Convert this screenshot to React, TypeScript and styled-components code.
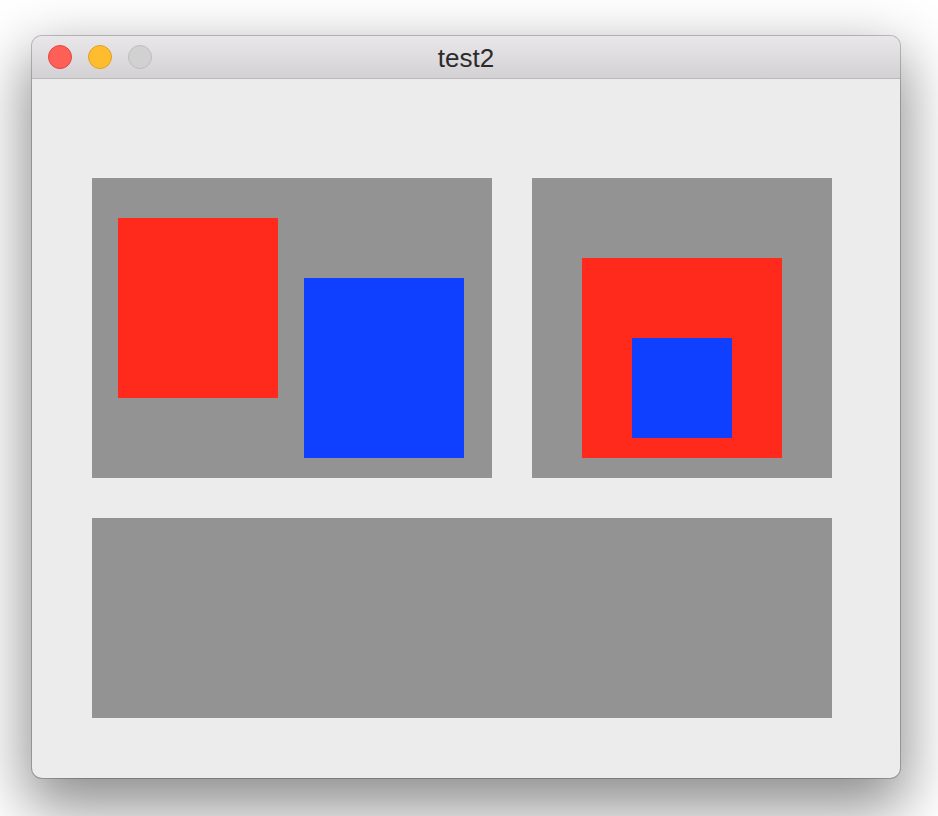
import React from "react";
import styled, { createGlobalStyle } from "styled-components";

const Global = createGlobalStyle`
  html, body { margin: 0; padding: 0; background: #ffffff; }
  body { width: 938px; height: 816px; overflow: hidden; font-family: "Liberation Sans", Arial, sans-serif; }
`;

const Page = styled.div`
  padding: 36px 0 0 32px;
`;

const Window = styled.div`
  width: 868px;
  height: 742px;
  box-sizing: border-box;
  border-radius: 10px;
  overflow: hidden;
  background: #ececec;
  box-shadow: 0 0 0 1px rgba(0, 0, 0, 0.22), 0 24px 60px 6px rgba(0, 0, 0, 0.45);
  display: flex;
  flex-direction: column;
`;

const TitleBar = styled.div`
  height: 42px;
  flex: none;
  position: relative;
  display: flex;
  align-items: center;
  justify-content: center;
  background: linear-gradient(#e9e7e9, #d3d1d3);
  border-bottom: 1px solid #b9b9b9;
`;

const Lights = styled.div`
  position: absolute;
  left: 16px;
  top: 9px;
  display: flex;
  gap: 16px;
`;

const Light = styled.span<{ $fill: string; $edge: string }>`
  width: 24px;
  height: 24px;
  box-sizing: border-box;
  border-radius: 50%;
  background: ${(p) => p.$fill};
  border: 1px solid ${(p) => p.$edge};
`;

const Title = styled.span`
  font-size: 26px;
  color: #2b2b2b;
  margin-top: 3px;
`;

const Content = styled.div`
  flex: 1;
  padding: 99px 0 0 60px;
  display: flex;
  flex-direction: column;
  gap: 40px;
`;

const Row = styled.div`
  display: flex;
  gap: 40px;
`;

const Panel = styled.div<{ $w: number; $h: number }>`
  width: ${(p) => p.$w}px;
  height: ${(p) => p.$h}px;
  background: #939393;
  display: flex;
  align-items: flex-start;
  box-sizing: border-box;
`;

const SplitPanel = styled(Panel)`
  padding: 40px 0 0 26px;
  gap: 26px;
`;

const NestPanel = styled(Panel)`
  padding: 80px 0 0 50px;
`;

const RedBlock = styled.div<{ $w: number; $h: number }>`
  width: ${(p) => p.$w}px;
  height: ${(p) => p.$h}px;
  background: #ff2a1b;
  box-sizing: border-box;
`;

const BlueBlock = styled.div<{ $w: number; $h: number; $top: number }>`
  width: ${(p) => p.$w}px;
  height: ${(p) => p.$h}px;
  margin-top: ${(p) => p.$top}px;
  background: #0f3fff;
`;

const OuterRed = styled(RedBlock)`
  padding: 80px 0 0 50px;
`;

export default function App() {
  return (
    <>
      <Global />
      <Page>
        <Window>
          <TitleBar>
            <Lights>
              <Light $fill="#fe5f57" $edge="#e2463f" />
              <Light $fill="#febc2e" $edge="#dea123" />
              <Light $fill="#d1d1d1" $edge="#bdbdbd" />
            </Lights>
            <Title>test2</Title>
          </TitleBar>
          <Content>
            <Row>
              <SplitPanel $w={400} $h={300}>
                <RedBlock $w={160} $h={180} />
                <BlueBlock $w={160} $h={180} $top={60} />
              </SplitPanel>
              <NestPanel $w={300} $h={300}>
                <OuterRed $w={200} $h={200}>
                  <BlueBlock $w={100} $h={100} $top={0} />
                </OuterRed>
              </NestPanel>
            </Row>
            <Panel $w={740} $h={200} />
          </Content>
        </Window>
      </Page>
    </>
  );
}
